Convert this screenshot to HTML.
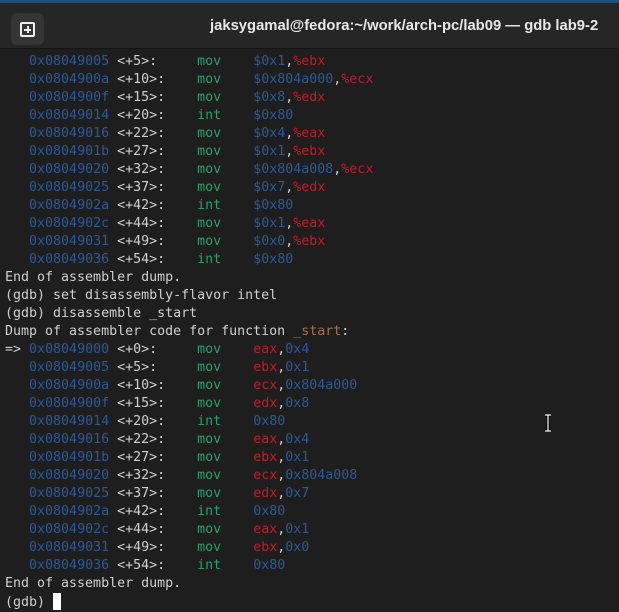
<!DOCTYPE html>
<html><head><style>
html,body{margin:0;padding:0;width:619px;height:609px;overflow:hidden;background:#1e1e1e}
.top{position:absolute;left:0;top:0;width:619px;height:3px;background:#1d4f7c}
.bar{position:absolute;left:0;top:3px;width:619px;height:45px;background:#262626;border-bottom:1px solid #141414}
.btn{position:absolute;left:11px;top:10px;width:33px;height:32px;background:#353535;border-radius:6px}
.btn div{position:absolute;left:9px;top:9px;width:11px;height:11px;border:2px solid #eee;border-radius:2px}
.btn div:before{content:"";position:absolute;left:2px;top:4.5px;width:7px;height:2px;background:#eee}
.btn div:after{content:"";position:absolute;left:4.5px;top:2px;width:2px;height:7px;background:#eee}
.title{position:absolute;left:0;right:0;top:15px;padding-left:210px;font:bold 14.8px "Liberation Sans",sans-serif;color:#e8e8e8}
pre{position:absolute;left:5px;top:53px;margin:0;font:13.3px/18px "DejaVu Sans Mono","Liberation Mono",monospace;color:#d0d0d0}
a{color:#2a5a98;text-decoration:none}g{color:#26a269}b{color:#2a5a98;font-weight:normal}r{color:#c01c28}
.cur{display:inline-block;width:8px;height:17px;background:#fff;vertical-align:-4px}
.ib{position:absolute;left:544px;top:414px;width:8px;height:18px}
</style></head><body>
<div class="top"></div>
<div class="bar"><div class="btn"><div></div></div><div class="title">jaksygamal@fedora:~/work/arch-pc/lab09 — gdb lab9-2</div></div>
<pre>   <a>0x08049005</a> &lt;+5&gt;:     <g>mov</g>    <b>$0x1</b>,<r>%ebx</r>
   <a>0x0804900a</a> &lt;+10&gt;:    <g>mov</g>    <b>$0x804a000</b>,<r>%ecx</r>
   <a>0x0804900f</a> &lt;+15&gt;:    <g>mov</g>    <b>$0x8</b>,<r>%edx</r>
   <a>0x08049014</a> &lt;+20&gt;:    <g>int</g>    <b>$0x80</b>
   <a>0x08049016</a> &lt;+22&gt;:    <g>mov</g>    <b>$0x4</b>,<r>%eax</r>
   <a>0x0804901b</a> &lt;+27&gt;:    <g>mov</g>    <b>$0x1</b>,<r>%ebx</r>
   <a>0x08049020</a> &lt;+32&gt;:    <g>mov</g>    <b>$0x804a008</b>,<r>%ecx</r>
   <a>0x08049025</a> &lt;+37&gt;:    <g>mov</g>    <b>$0x7</b>,<r>%edx</r>
   <a>0x0804902a</a> &lt;+42&gt;:    <g>int</g>    <b>$0x80</b>
   <a>0x0804902c</a> &lt;+44&gt;:    <g>mov</g>    <b>$0x1</b>,<r>%eax</r>
   <a>0x08049031</a> &lt;+49&gt;:    <g>mov</g>    <b>$0x0</b>,<r>%ebx</r>
   <a>0x08049036</a> &lt;+54&gt;:    <g>int</g>    <b>$0x80</b>
End of assembler dump.
(gdb) set disassembly-flavor intel
(gdb) disassemble _start
Dump of assembler code for function <span style="color:#a2734c">_start</span>:
=&gt; <a>0x08049000</a> &lt;+0&gt;:     <g>mov</g>    <r>eax</r>,<b>0x4</b>
   <a>0x08049005</a> &lt;+5&gt;:     <g>mov</g>    <r>ebx</r>,<b>0x1</b>
   <a>0x0804900a</a> &lt;+10&gt;:    <g>mov</g>    <r>ecx</r>,<b>0x804a000</b>
   <a>0x0804900f</a> &lt;+15&gt;:    <g>mov</g>    <r>edx</r>,<b>0x8</b>
   <a>0x08049014</a> &lt;+20&gt;:    <g>int</g>    <b>0x80</b>
   <a>0x08049016</a> &lt;+22&gt;:    <g>mov</g>    <r>eax</r>,<b>0x4</b>
   <a>0x0804901b</a> &lt;+27&gt;:    <g>mov</g>    <r>ebx</r>,<b>0x1</b>
   <a>0x08049020</a> &lt;+32&gt;:    <g>mov</g>    <r>ecx</r>,<b>0x804a008</b>
   <a>0x08049025</a> &lt;+37&gt;:    <g>mov</g>    <r>edx</r>,<b>0x7</b>
   <a>0x0804902a</a> &lt;+42&gt;:    <g>int</g>    <b>0x80</b>
   <a>0x0804902c</a> &lt;+44&gt;:    <g>mov</g>    <r>eax</r>,<b>0x1</b>
   <a>0x08049031</a> &lt;+49&gt;:    <g>mov</g>    <r>ebx</r>,<b>0x0</b>
   <a>0x08049036</a> &lt;+54&gt;:    <g>int</g>    <b>0x80</b>
End of assembler dump.
(gdb) <span class="cur"></span></pre>
<svg class="ib" viewBox="0 0 8 18"><path d="M1 1h6M4 1v16M1 17h6" stroke="#000" stroke-width="3" fill="none"/><path d="M1 1h6M4 1v16M1 17h6" stroke="#fff" stroke-width="1.2" fill="none"/></svg>
</body></html>
